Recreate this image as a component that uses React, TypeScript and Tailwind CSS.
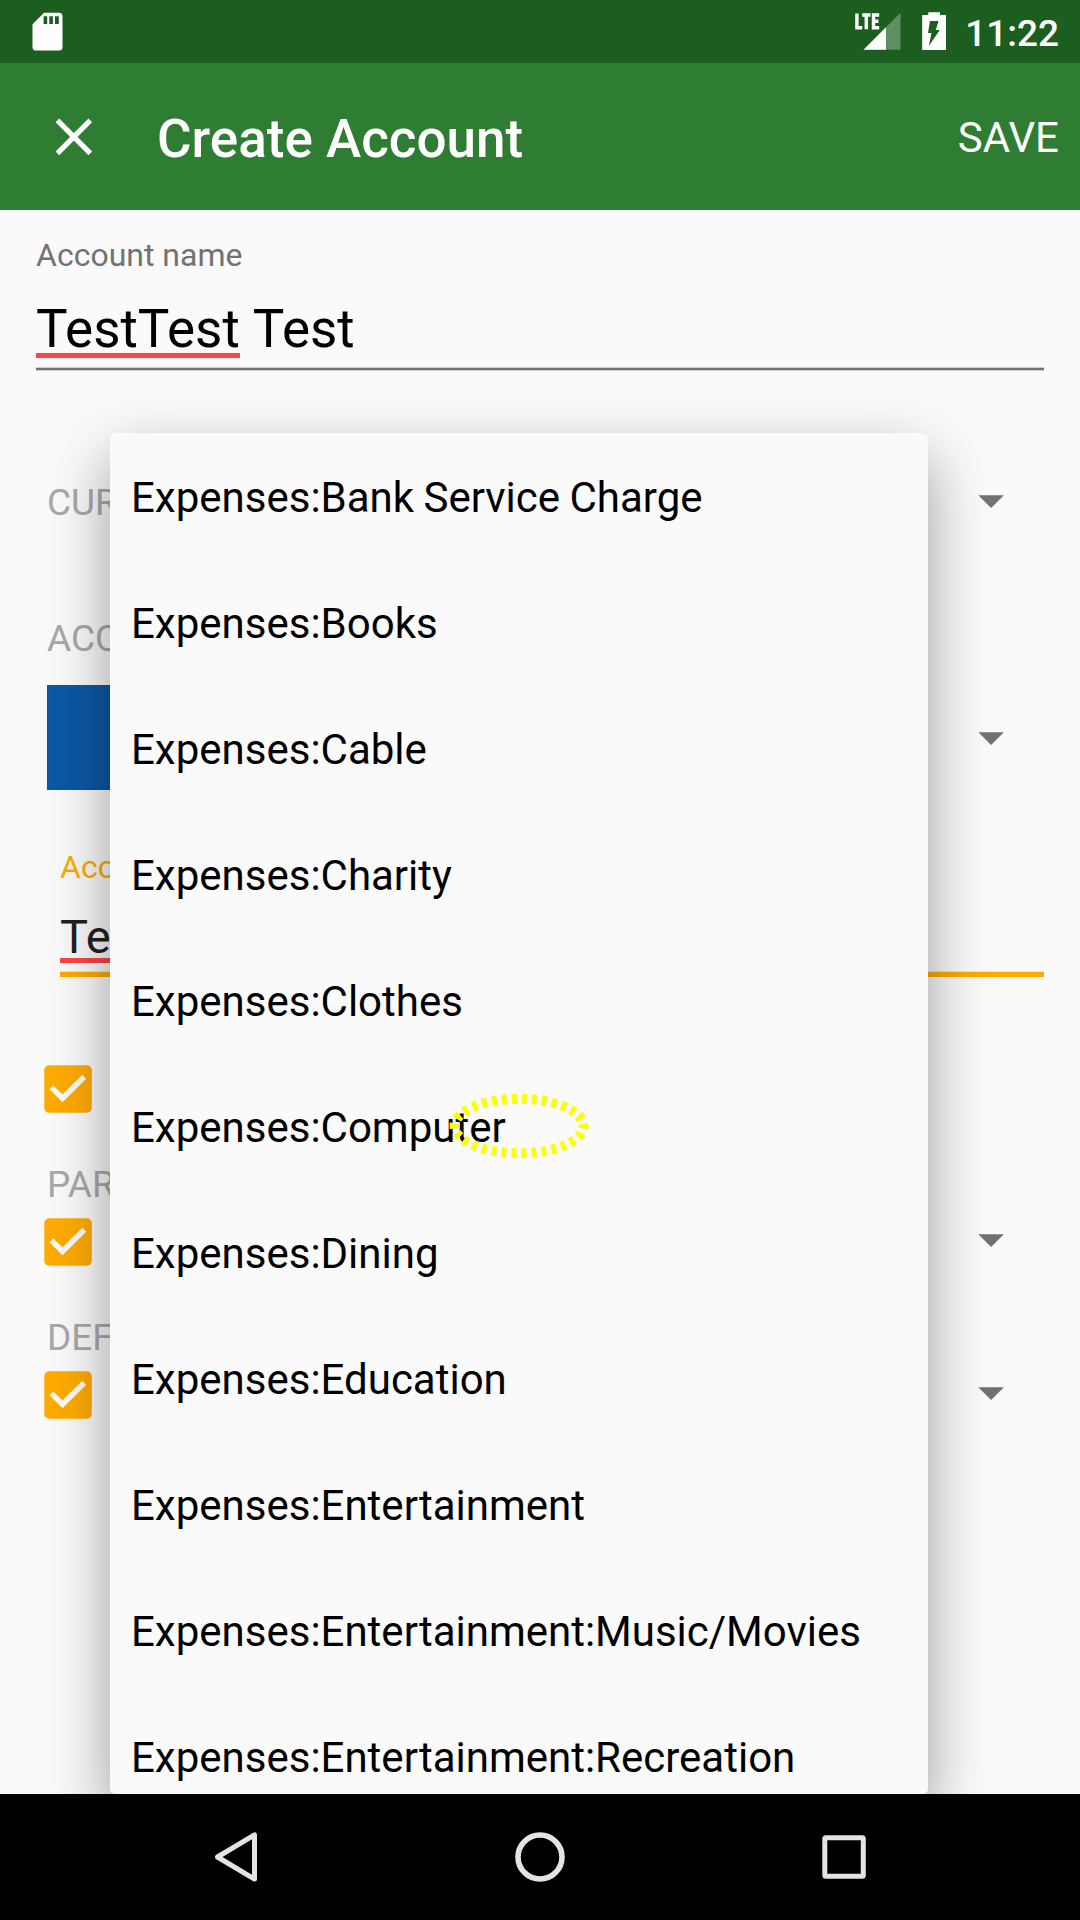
import React from "react";

const accounts = [
  "Expenses:Bank Service Charge",
  "Expenses:Books",
  "Expenses:Cable",
  "Expenses:Charity",
  "Expenses:Clothes",
  "Expenses:Computer",
  "Expenses:Dining",
  "Expenses:Education",
  "Expenses:Entertainment",
  "Expenses:Entertainment:Music/Movies",
  "Expenses:Entertainment:Recreation",
];

function StatusBar() {
  return (
    <div className="flex h-[63px] shrink-0 items-start bg-[#1b5e20] text-white">
      <svg className="ml-8 mt-3 h-[39px] w-[31px]" viewBox="0 0 31 39">
        <path
          fillRule="evenodd"
          fill="#fff"
          d="M12 .7H27Q30.5 .7 30.5 4.2V35Q30.5 38.5 27 38.5H4Q.5 38.5 .5 35V12.2ZM11.6 4.2V12H15.2V4.2ZM17.3 4.2V12H20.9V4.2ZM23 4.2V12H26.8V4.2Z"
        />
      </svg>
      <div className="ml-auto mt-3 flex items-start">
        <svg className="h-[38px] w-[46px]" viewBox="0 0 46 38">
          <path fill="#fff" fillOpacity=".3" d="M45.5 .7V37.7H8.5Z" />
          <path fill="#fff" d="M31 15.2V37.7H8.5Z" />
          <path fill="#1b5e20" d="M0 0H26V18H0Z" />
          <path
            fill="none"
            stroke="#fff"
            strokeWidth="3.4"
            d="M1.9 1.5V15.7H7.2M7.2 3H15.4M11.3 3V17.3M24.2 3H18.5V15.7H24.2M18.5 9.3H23.4"
          />
        </svg>
        <svg className="ml-[21px] h-[38px] w-6" viewBox="0 0 24 38">
          <path
            fillRule="evenodd"
            fill="#fff"
            d="M6.3 .3H18V3H24V38H.2V3H6.3ZM8 9H16.5L13.8 18H17.8L6.8 34L9.5 21H6Z"
          />
        </svg>
        <span className="ml-[19px] mr-[21px] text-[37px] font-medium leading-[43px]">11:22</span>
      </div>
    </div>
  );
}

function AppBar() {
  return (
    <div className="flex h-[147px] shrink-0 items-center bg-[#2e7d32] pl-[55px] pr-[21px] pt-[5px] text-white">
      <svg className="-mt-[5px] h-[38px] w-[38px]" viewBox="0 0 38 38">
        <path stroke="#fff" strokeWidth="5.2" d="M2.4 2.4L35.3 35.3M35.3 2.4L2.4 35.3" />
      </svg>
      <h1 className="ml-16 text-[53px] font-medium leading-[62px]">Create Account</h1>
      <span className="ml-auto pb-[2px] text-[42px] leading-[50px]">SAVE</span>
    </div>
  );
}

function Arrow() {
  return (
    <svg className="h-[13px] w-[27px]" viewBox="0 0 27 13">
      <path fill="#727272" d="M.3 .2H25.9L13.1 13Z" />
    </svg>
  );
}

function Checkbox() {
  return (
    <svg className="h-12 w-12 shrink-0" viewBox="0 0 48 48">
      <rect x="0.3" y="0.3" width="47.5" height="47.5" rx="5" fill="#ffab00" />
      <path fill="none" stroke="#fafafa" strokeWidth="5.5" d="M7.4 22.4L18.5 33.3L40.3 11.8" />
    </svg>
  );
}

function AccountForm() {
  return (
    <div className="flex flex-col pl-9 pr-9">
      <div className="mt-[26px] h-[38px] text-[32px] leading-[38px] text-[#727272]">Account name</div>
      <div className="mt-[24px] flex h-[60px] text-[53px] leading-[62px] text-black">
        <span className="h-[60px] border-b-[5px] border-[#ff4444]">TestTest</span>
        <span className="ml-px whitespace-pre"> Test</span>
      </div>
      <div className="mt-[9px] h-[4px] border-y border-[#d0d0d0] bg-[#727272]" />

      <div className="mt-[109px] flex h-[43px] items-center justify-between pl-[11px] pr-[39px]">
        <span className="w-[64px] overflow-hidden pt-[2px] text-[37px] leading-[43px] text-[#a8a8a8]">CURRENCY</span>
        <Arrow />
      </div>

      <div className="ml-[11px] mt-[94px] h-[43px] w-[64px] overflow-hidden whitespace-nowrap text-[37px] leading-[43px] text-[#a8a8a8]">
        ACCOUNT
      </div>
      <div className="mt-[25px] flex h-[105px] items-center justify-between pl-[11px] pr-[39px]">
        <div className="h-[105px] w-[420px] bg-[#0b58a5]" />
        <div className="pt-[2px]">
          <Arrow />
        </div>
      </div>

      <div className="ml-6 mt-[58px] h-[38px] w-[51px] overflow-hidden whitespace-nowrap text-[32px] leading-[38px] text-[#ffab00]">
        Account
      </div>
      <div className="ml-6 mt-[23px] h-[54px] w-[51px] overflow-hidden border-b-[5px] border-[#ff4444] text-[47px] leading-[55px] text-[#212121]">
        TestTest
      </div>
      <div className="ml-6 mt-[8px] h-[6px] border-t border-[#f3e6cc] bg-[#ffab00]" />

      <div className="ml-2 mt-[88px] flex h-12 items-center">
        <Checkbox />
      </div>

      <div className="ml-[11px] mt-[50px] h-[44px] w-[64px] overflow-hidden whitespace-nowrap text-[37px] leading-[43px] text-[#a8a8a8]">
        PARENT
      </div>
      <div className="ml-2 mt-[11px] flex h-12 items-center justify-between pr-[39px]">
        <Checkbox />
        <div className="pb-[3px]">
          <Arrow />
        </div>
      </div>

      <div className="ml-[11px] mt-[50px] h-[44px] w-[64px] overflow-hidden whitespace-nowrap text-[37px] leading-[43px] text-[#a8a8a8]">
        DEFAULT
      </div>
      <div className="ml-2 mt-[11px] flex h-12 items-center justify-between pr-[39px]">
        <Checkbox />
        <div className="pb-[3px]">
          <Arrow />
        </div>
      </div>
    </div>
  );
}

function AccountMenu() {
  return (
    <div className="absolute left-[110px] top-[223px] h-[1361px] w-[818px] rounded-[5px] bg-[#fafafa] shadow-[0_25px_62px_rgba(0,0,0,0.38)]">
      <ul className="flex h-full flex-col overflow-hidden pt-[2px]">
        {accounts.map((name) => (
          <li key={name} className="h-[126px] shrink-0 pl-[21px] text-[42px] leading-[126px] text-black [word-spacing:-1px]">
            {name}
          </li>
        ))}
      </ul>
      <svg className="absolute left-[338px] top-[660px] h-[66px] w-[142px]" viewBox="0 0 142 66">
        <ellipse
          cx="71"
          cy="33"
          rx="64.5"
          ry="27.2"
          fill="none"
          stroke="#ffff00"
          strokeWidth="10"
          strokeDasharray="5 5"
          strokeDashoffset="2.5"
        />
      </svg>
    </div>
  );
}

function NavigationBar() {
  return (
    <div className="relative flex h-[126px] shrink-0 items-center justify-between bg-black pl-[212px] pr-[212px]">
      <svg className="h-[52px] w-[48px]" viewBox="0 0 48 52" fill="none" stroke="#e4e4e4">
        <path strokeWidth="5" strokeLinejoin="round" d="M42.5 3.9V48.1L5.5 26Z" />
      </svg>
      <svg className="h-[52px] w-[52px]" viewBox="0 0 52 52" fill="none" stroke="#e4e4e4">
        <circle cx="26" cy="26" r="22" strokeWidth="5.6" />
      </svg>
      <svg className="h-[46px] w-[48px]" viewBox="0 0 48 46" fill="none" stroke="#e4e4e4">
        <rect x="4.8" y="3.8" width="38.5" height="38.5" rx="1" strokeWidth="5" />
      </svg>
    </div>
  );
}

export default function App() {
  return (
    <div className="flex h-[1920px] w-[1080px] flex-col overflow-hidden bg-[#fafafa] font-['Roboto',sans-serif]">
      <StatusBar />
      <AppBar />
      <main className="relative h-[1584px] shrink-0 overflow-hidden">
        <AccountForm />
        <AccountMenu />
      </main>
      <NavigationBar />
    </div>
  );
}
